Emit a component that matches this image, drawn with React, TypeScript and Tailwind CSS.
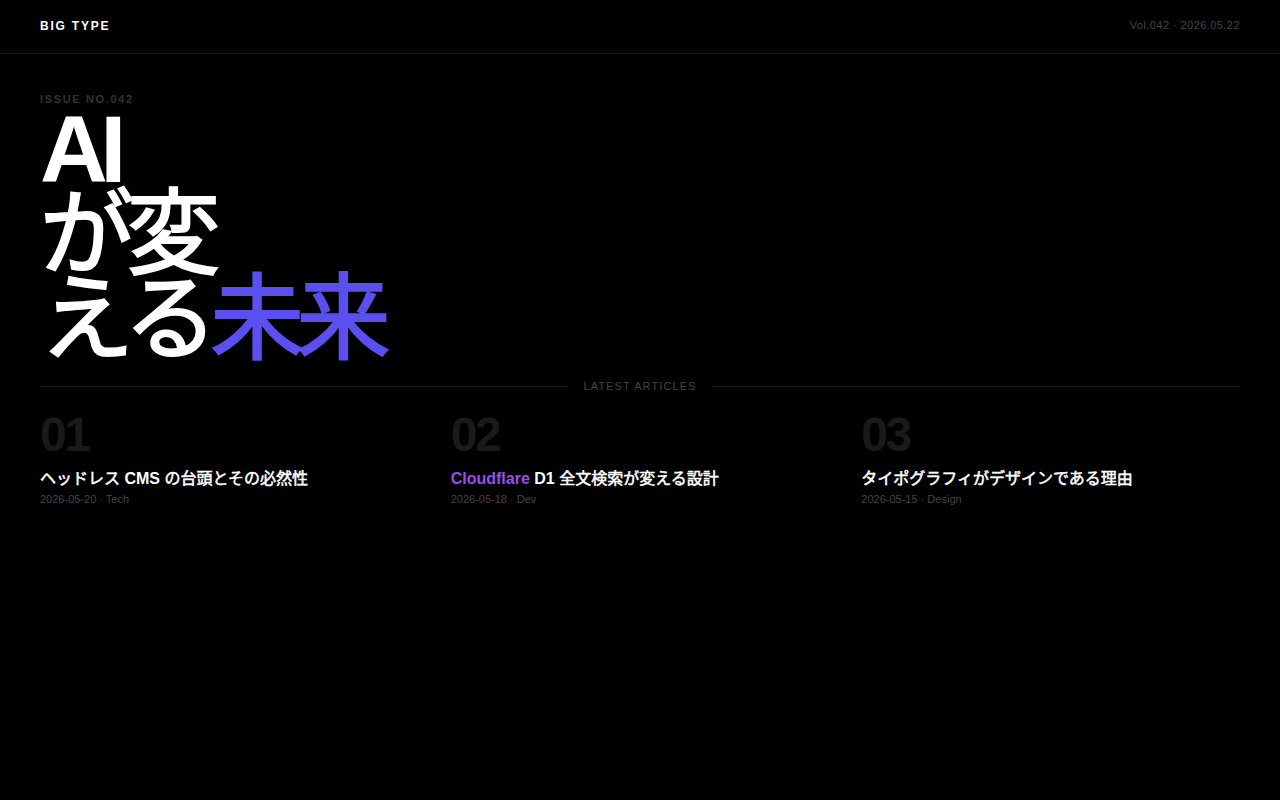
const sans = "font-['Liberation_Sans','Noto_Sans_CJK_JP',sans-serif]";

const articles = [
  { no: '01', pre: '', latin: '', title: 'ヘッドレス CMS の台頭とその必然性', meta: '2026-05-20 · Tech' },
  { no: '02', pre: 'Cloudflare', latin: ' D1 ', title: '全文検索が変える設計', meta: '2026-05-18 · Dev' },
  { no: '03', pre: '', latin: '', title: 'タイポグラフィがデザインである理由', meta: '2026-05-15 · Design' },
];

// Latin words bold, Japanese glyphs in a medium weight (as in the reference)
function Mixed({ text }: { text: string }) {
  const parts = text.split(/([A-Za-z0-9]+)/);
  return (
    <>
      {parts.map((p, i) =>
        /^[A-Za-z0-9]+$/.test(p) ? (
          <span key={i} className="font-bold">{p}</span>
        ) : (
          <span key={i} className="font-normal [-webkit-text-stroke:0.5px_currentColor]">{p}</span>
        ),
      )}
    </>
  );
}

export default function App() {
  return (
    <div className={`min-h-screen bg-black text-white ${sans}`}>
      {/* Header */}
      <header className="h-[54px] px-10 flex items-center justify-between border-b border-[#1a1a1a]">
        <span className="text-[12px] font-bold tracking-[0.15em] -mt-[2px]">BIG TYPE</span>
        <span className="text-[11px] tracking-[0.04em] text-[#444] -mt-[2px]">Vol.042 · 2026.05.22</span>
      </header>

      {/* Hero */}
      <section className="px-10 pt-[39px]">
        <p className="text-[11px] font-bold tracking-[0.15em] text-[#333] leading-[12px]">ISSUE NO.042</p>
        <h1 className="mt-[2px] text-[94px] leading-[85px] tracking-[-0.08em]">
          <span className="font-black">AI</span>
          <br />
          <span className="font-normal [-webkit-text-stroke:2px_currentColor]">が変</span>
          <br />
          <span className="font-normal [-webkit-text-stroke:2px_currentColor]">える</span>
          <span className="font-normal text-[#5b4ff0] [-webkit-text-stroke:2px_currentColor]">未来</span>
        </h1>
      </section>

      {/* Latest articles */}
      <section className="px-10 mt-[16px]">
        <div className="flex items-center gap-[15px]">
          <div className="flex-1 h-px bg-[#1c1c1c]" />
          <span className="text-[11px] tracking-[0.1em] text-[#444]">LATEST ARTICLES</span>
          <div className="flex-1 h-px bg-[#1c1c1c]" />
        </div>
        <div className="grid grid-cols-3 gap-8 mt-[16px]">
          {articles.map((a) => (
            <article key={a.no}>
              <div className="text-[48px] font-black leading-[48px] tracking-tighter text-[#1a1a1a]">{a.no}</div>
              <h2 className="mt-[9px] text-[16px] leading-[22px] text-white">
                {a.pre && <span className="font-bold text-[#9b4dea]">{a.pre}</span>}
                {a.latin && <span className="font-bold">{a.latin}</span>}
                <Mixed text={a.title} />
              </h2>
              <p className="mt-[1px] text-[11px] text-[#444]">{a.meta}</p>
            </article>
          ))}
        </div>
      </section>
    </div>
  );
}
